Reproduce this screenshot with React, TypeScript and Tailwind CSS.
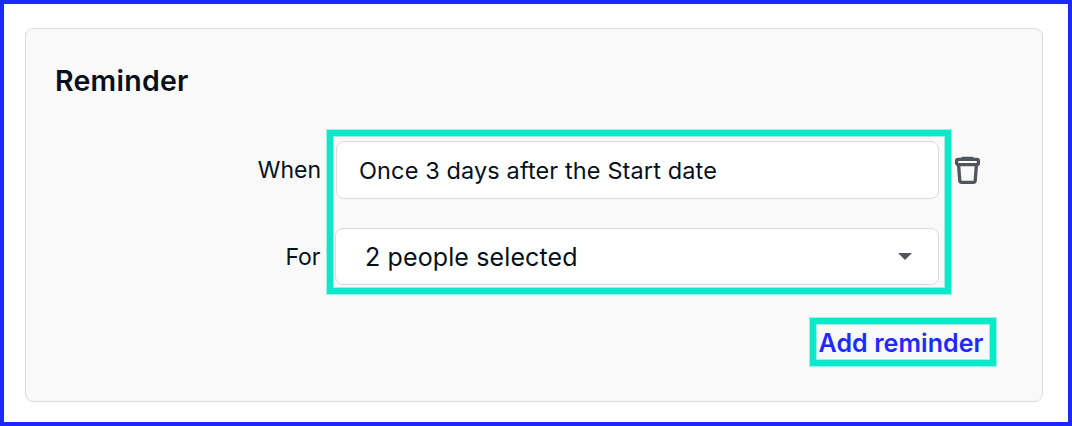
function TrashIcon() {
  return (
    <svg viewBox="0 0 28 32" className="h-8 w-7 shrink-0" fill="none" stroke="#51555c" strokeWidth="3.3" strokeLinejoin="round" strokeLinecap="round">
      <rect x="3.6" y="4.4" width="21.8" height="5.2" rx="1.6" />
      <path d="M9.6 3.2h9.8" strokeWidth="3" />
      <path d="M5.6 10.2l1.2 15.4c.1 1.2.8 1.8 2 1.8h11.4c1.2 0 1.9-.6 2-1.8l1.2-15.4" />
    </svg>
  );
}

export default function App() {
  return (
    <main className="flex h-[426px] w-[1072px] border-4 border-[#1a29ff] bg-white pt-6 pl-[21px] font-['Inter',sans-serif] text-[#05101a]">
      <section className="h-[374px] w-[1018px] rounded-lg border border-[#dcdcdd] bg-[#f9f9f9] pt-[34px] pl-[29px]">
        <h2 className="h-9 text-[28.5px] leading-[35px] font-semibold tracking-[0.25px]">Reminder</h2>
        <div className="mt-[31px] flex">
          <div className="w-[271px] pr-[5px] text-right text-[23px]">
            <div className="h-[87px] pt-[22px] leading-9">When</div>
            <div className="pt-[22px] pr-[0.5px] leading-9">For</div>
          </div>
          <div className="ml-px flex h-[164px] w-[624px] flex-col items-end gap-[29px] border-[6px] border-[#0ce8c9] pt-[5px] pr-[6px] shadow-[0_0_0_1px_#0ce8c966,inset_0_0_0_1px_#0ce8c966]">
            <div className="flex h-[58px] w-[603px] shrink-0 items-center rounded-lg border border-[#dcdcdd] bg-white pt-0.5 pl-[22px] text-[23.5px] tracking-[0.12px]">Once 3 days after the Start date</div>
            <div className="flex h-[57px] w-[604px] shrink-0 items-center justify-between rounded-lg border border-[#dcdcdd] bg-white pr-[26.5px] pl-[29px] text-[25px] tracking-[0.12px]">
              <span className="pt-0.5">2 people selected</span>
              <svg viewBox="0 0 14 7" className="h-[7px] w-[14px]" fill="#51555c"><path d="M0 0h14L7 7z" /></svg>
            </div>
          </div>
          <button aria-label="Delete reminder" className="mt-[25px] ml-[2px] h-8"><TrashIcon /></button>
        </div>
        <button className="mt-6 ml-[755px] flex h-12 w-[186px] items-center border-[6px] border-[#0ce8c9] pt-[3px] pl-[2.5px] text-[25px] font-semibold tracking-[0.08px] whitespace-nowrap text-[#2229ff] shadow-[0_0_0_1px_#0ce8c966,inset_0_0_0_1px_#0ce8c966]">Add reminder</button>
      </section>
    </main>
  );
}
